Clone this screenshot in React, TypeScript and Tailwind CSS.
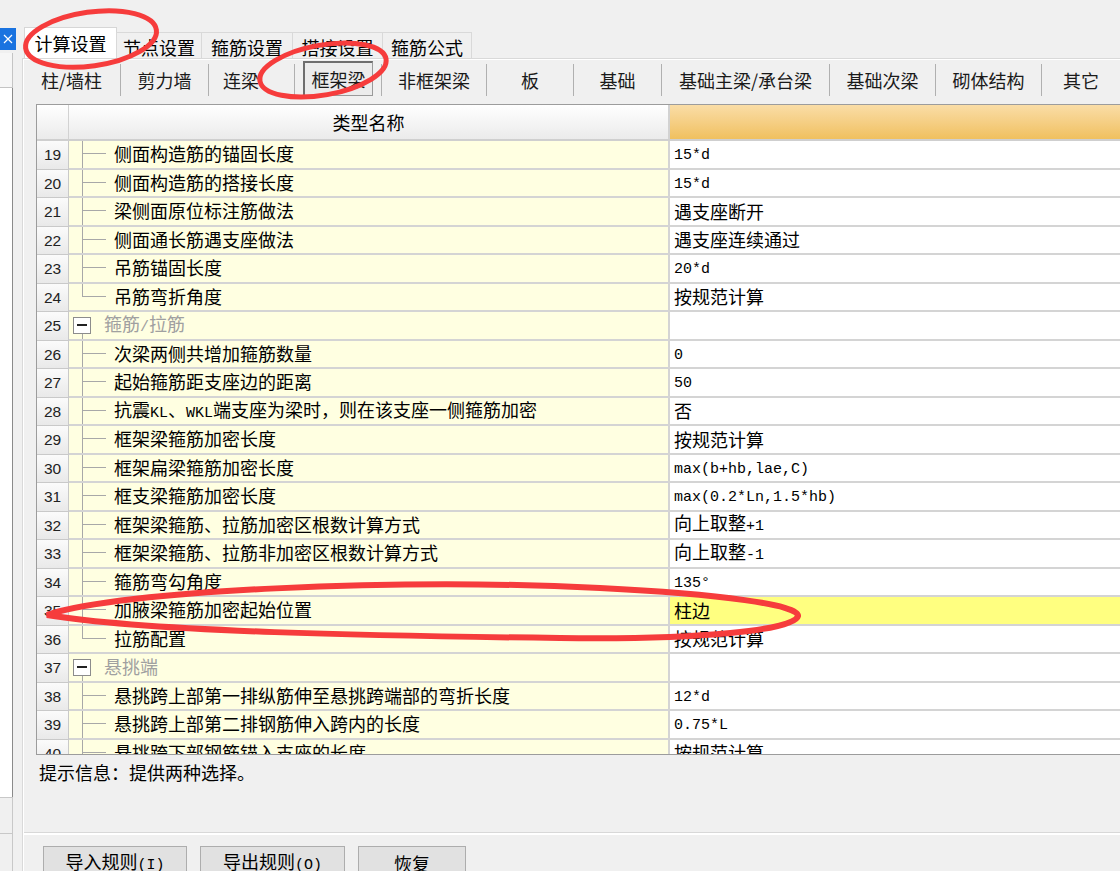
// App.tsx
import React from "react";

type Row = {
  n: number;
  name: string;
  value?: string;
  group?: boolean;
  last?: boolean;
  selected?: boolean;
};

const rows: Row[] = [
  { n: 19, name: "侧面构造筋的锚固长度", value: "15*d" },
  { n: 20, name: "侧面构造筋的搭接长度", value: "15*d" },
  { n: 21, name: "梁侧面原位标注筋做法", value: "遇支座断开" },
  { n: 22, name: "侧面通长筋遇支座做法", value: "遇支座连续通过" },
  { n: 23, name: "吊筋锚固长度", value: "20*d" },
  { n: 24, name: "吊筋弯折角度", value: "按规范计算", last: true },
  { n: 25, name: "箍筋/拉筋", group: true },
  { n: 26, name: "次梁两侧共增加箍筋数量", value: "0" },
  { n: 27, name: "起始箍筋距支座边的距离", value: "50" },
  { n: 28, name: "抗震KL、WKL端支座为梁时，则在该支座一侧箍筋加密", value: "否" },
  { n: 29, name: "框架梁箍筋加密长度", value: "按规范计算" },
  { n: 30, name: "框架扁梁箍筋加密长度", value: "max(b+hb,lae,C)" },
  { n: 31, name: "框支梁箍筋加密长度", value: "max(0.2*Ln,1.5*hb)" },
  { n: 32, name: "框架梁箍筋、拉筋加密区根数计算方式", value: "向上取整+1" },
  { n: 33, name: "框架梁箍筋、拉筋非加密区根数计算方式", value: "向上取整-1" },
  { n: 34, name: "箍筋弯勾角度", value: "135°" },
  { n: 35, name: "加腋梁箍筋加密起始位置", value: "柱边", selected: true },
  { n: 36, name: "拉筋配置", value: "按规范计算", last: true },
  { n: 37, name: "悬挑端", group: true },
  { n: 38, name: "悬挑跨上部第一排纵筋伸至悬挑跨端部的弯折长度", value: "12*d" },
  { n: 39, name: "悬挑跨上部第二排钢筋伸入跨内的长度", value: "0.75*L" },
  { n: 40, name: "悬挑跨下部钢筋锚入支座的长度", value: "按规范计算" },
];

const tabs = ["计算设置", "节点设置", "箍筋设置", "搭接设置", "箍筋公式"];
const tabWidths = ["w-[93px]", "w-[86px]", "w-[92px]", "w-[91px]", "w-[90px]"];

const subTabs = [
  { label: "柱/墙柱", w: "w-[98px] justify-center" },
  { label: "剪力墙", w: "w-[88px] justify-center" },
  { label: "连梁", w: "w-[86px] justify-start pl-[14px]" },
  { label: "框架梁", w: "w-[87px] justify-center", pressed: true },
  { label: "非框架梁", w: "w-[105px] justify-center" },
  { label: "板", w: "w-[87px] justify-center" },
  { label: "基础", w: "w-[88px] justify-center" },
  { label: "基础主梁/承台梁", w: "w-[168px] justify-center" },
  { label: "基础次梁", w: "w-[106px] justify-center" },
  { label: "砌体结构", w: "w-[106px] justify-center" },
  { label: "其它", w: "flex-1 justify-center border-r-0" },
];

// split text into CJK and ascii runs so each gets its own font
const Mixed = ({ text }: { text: string }) => {
  const parts = text.split(/([\u0000-\u00ff]+)/).filter((p) => p !== "");
  return (
    <span className="whitespace-nowrap leading-[20px]">
      {parts.map((p, i) =>
        /^[\u0000-\u00ff]+$/.test(p) ? (
          <span key={i} className="font-['Liberation_Mono',monospace] text-[15px]">
            {p}
          </span>
        ) : (
          <span key={i} className="font-['Noto_Sans_CJK_SC',sans-serif] text-[18px]">
            {p}
          </span>
        )
      )}
    </span>
  );
};

const TreeCell = ({ row }: { row: Row }) => {
  if (row.group) {
    return (
      <div className="flex h-full w-[31px] shrink-0 pl-[4px]">
        <div className="flex h-full w-[18px] flex-col">
          <div className="flex-1" />
          <div className="flex h-[17px] w-[18px] items-center justify-center border border-[#8c8c8c] bg-white">
            <div className="h-[2px] w-[10px] bg-[#222]" />
          </div>
          <div className="ml-[9px] flex-1 border-l border-[#a8a8a8]" />
        </div>
      </div>
    );
  }
  return (
    <div className="flex h-full w-[45px] shrink-0">
      <div className="w-[13px] shrink-0" />
      <div className="flex h-full w-[24px] flex-col">
        <div className="h-1/2 border-b border-l border-[#a8a8a8]" />
        <div className={row.last ? "h-1/2" : "h-1/2 border-l border-[#a8a8a8]"} />
      </div>
    </div>
  );
};

const GridRow = ({ row }: { row: Row }) => (
  <div className="flex h-[28.5px] shrink-0">
    <div className="flex w-[32px] shrink-0 items-center justify-center border-r border-b border-[#c9c9c9] bg-linear-to-b from-[#fbfbfb] to-[#e9e9e9] font-['Liberation_Sans',sans-serif] text-[15.5px] text-[#222]">
      {row.n}
    </div>
    <div className="flex w-[601px] shrink-0 items-center border-r-2 border-b-2 border-[#d4d4d4] bg-[#ffffe1]">
      <TreeCell row={row} />
      <div className={row.group ? "pl-[4px] text-[#a0a0a0]" : "text-black"}>
        <Mixed text={row.name} />
      </div>
    </div>
    <div
      className={
        row.selected
          ? "flex flex-1 items-center border-b-2 border-[#d4d4d4] bg-[#ffff80] pl-[4px] text-black"
          : "flex flex-1 items-center border-b-2 border-[#d4d4d4] bg-white pl-[4px] text-black"
      }
    >
      {row.value ? <Mixed text={row.value} /> : null}
    </div>
  </div>
);

const Marks = () => (
  <svg className="pointer-events-none absolute inset-0" width={1120} height={871} viewBox="0 0 1120 871">
    <ellipse cx={91} cy={39} rx={66} ry={27} transform="rotate(-8 91 39)" fill="none" stroke="#f63c3c" strokeWidth={5} />
    <ellipse cx={323} cy={70} rx={64} ry={25} transform="rotate(-10 323 70)" fill="none" stroke="#f63c3c" strokeWidth={5} />
    <path
      d="M47,615 C120,590 400,578 600,588 C720,594 800,605 798,616 C795,630 700,640 560,638 C380,636 150,632 47,615 Z"
      fill="none"
      stroke="#f63c3c"
      strokeWidth={6}
    />
  </svg>
);

const App = () => {
  return (
    <div className="relative flex h-[871px] w-[1120px] overflow-hidden bg-[#f0f0f0] font-['Noto_Sans_CJK_SC',sans-serif] text-black">
      {/* left strip */}
      <div className="flex w-[22px] shrink-0 flex-col">
        <div className="h-[28px] shrink-0" />
        <div className="flex h-[22px] w-[16px] shrink-0 items-center justify-center bg-[#1a73e0]">
          <svg width="10" height="10" viewBox="0 0 10 10">
            <path d="M1 1 L9 9 M9 1 L1 9" stroke="#fff" strokeWidth="1.2" />
          </svg>
        </div>
        <div className="h-[3px] shrink-0" />
        <div className="h-[35px] w-[13px] shrink-0 border-r border-b border-[#c4c4c4] bg-[#f6f6f6]" />
        <div className="h-[709px] w-[13px] shrink-0 border-r border-[#8a8a8a] bg-white" />
        <div className="h-[36px] w-[13px] shrink-0 border-t border-r border-[#c8c8c8]" />
        <div className="h-[38px] w-[13px] shrink-0 border-t border-r border-[#c8c8c8]" />
      </div>

      {/* main */}
      <div className="flex min-h-0 flex-1 flex-col">
        <div className="h-[27px] shrink-0" />
        {/* tab strip */}
        <div className="flex h-[31px] shrink-0 items-end pl-[2px]">
          {tabs.map((t, i) =>
            i === 0 ? (
              <div
                key={t}
                className={`${tabWidths[i]} flex h-[31px] items-center justify-center border border-b-0 border-[#d6d6d6] bg-white pb-[1px] text-[18px] leading-none`}
              >
                {t}
              </div>
            ) : (
              <div
                key={t}
                className={`${tabWidths[i]} -ml-px flex h-[26px] items-center justify-center border border-b-0 border-[#d9d9d9] bg-[#f0f0f0] pt-[2px] text-[18px] leading-none`}
              >
                {t}
              </div>
            )
          )}
        </div>

        {/* tab panel */}
        <div className="flex shrink-0 flex-col border-t border-l border-[#d9d9d9]">
          <div className="flex flex-col border-t border-l border-white">
            {/* sub tabs */}
            <div className="-ml-px flex h-[36px] shrink-0 items-end">
              {subTabs.map((s) =>
                s.pressed ? (
                  <div
                    key={s.label}
                    className={`${s.w} flex h-[32px] shrink-0 items-end border-r border-[#b0b0b0] text-[18px] leading-none text-[#1a1a1a]`}
                  >
                    <div className="flex h-[35px] w-[70px] shrink-0 items-center justify-center border border-t-2 border-l-2 border-[#6e6e6e] border-r-[#9a9a9a] border-b-[#9a9a9a] bg-[#ececec]">
                      {s.label}
                    </div>
                  </div>
                ) : (
                  <div
                    key={s.label}
                    className={`${s.w} flex h-[32px] shrink-0 items-center border-r border-[#b0b0b0] text-[18px] leading-none text-[#1a1a1a]`}
                  >
                    {s.label}
                  </div>
                )
              )}
            </div>

            {/* grid */}
            <div className="mt-[8px] ml-[12px] flex h-[651px] shrink-0 flex-col overflow-hidden border border-r-0 border-[#9c9c9c]">
              <div className="flex h-[36px] shrink-0 border-b-2 border-[#cfcfcf]">
                <div className="w-[32px] shrink-0 border-r border-[#d2d2d2] bg-linear-to-b from-white to-[#ebebeb]" />
                <div className="flex w-[601px] shrink-0 items-center justify-center border-r-2 border-[#d2d2d2] bg-linear-to-b from-white to-[#ebebeb] text-[18px] leading-none">
                  类型名称
                </div>
                <div className="flex-1 bg-linear-to-b from-[#fadda6] to-[#f0c05e]" />
              </div>
              {rows.map((r) => (
                <GridRow key={r.n} row={r} />
              ))}
            </div>

            {/* info */}
            <div className="flex h-[77px] shrink-0 flex-col pl-[15px] pt-[7px]">
              <div className="text-[18px] leading-[20px]">提示信息：提供两种选择。</div>
            </div>
            <div className="h-px shrink-0 bg-[#d8d8d8]" />
            <div className="h-[2px] shrink-0 bg-white" />

            {/* buttons */}
            <div className="flex shrink-0 gap-[13px] pt-[11px] pl-[19px]">
              <div className="flex h-[34px] w-[144px] shrink-0 items-center justify-center border border-[#adadad] bg-[#e1e1e1]">
                <Mixed text="导入规则(I)" />
              </div>
              <div className="flex h-[34px] w-[145px] shrink-0 items-center justify-center border border-[#adadad] bg-[#e1e1e1]">
                <Mixed text="导出规则(O)" />
              </div>
              <div className="flex h-[34px] w-[108px] shrink-0 items-center justify-center border border-[#adadad] bg-[#e1e1e1]">
                <Mixed text="恢复" />
              </div>
            </div>
          </div>
        </div>
      </div>

      <Marks />
    </div>
  );
};

export default App;
